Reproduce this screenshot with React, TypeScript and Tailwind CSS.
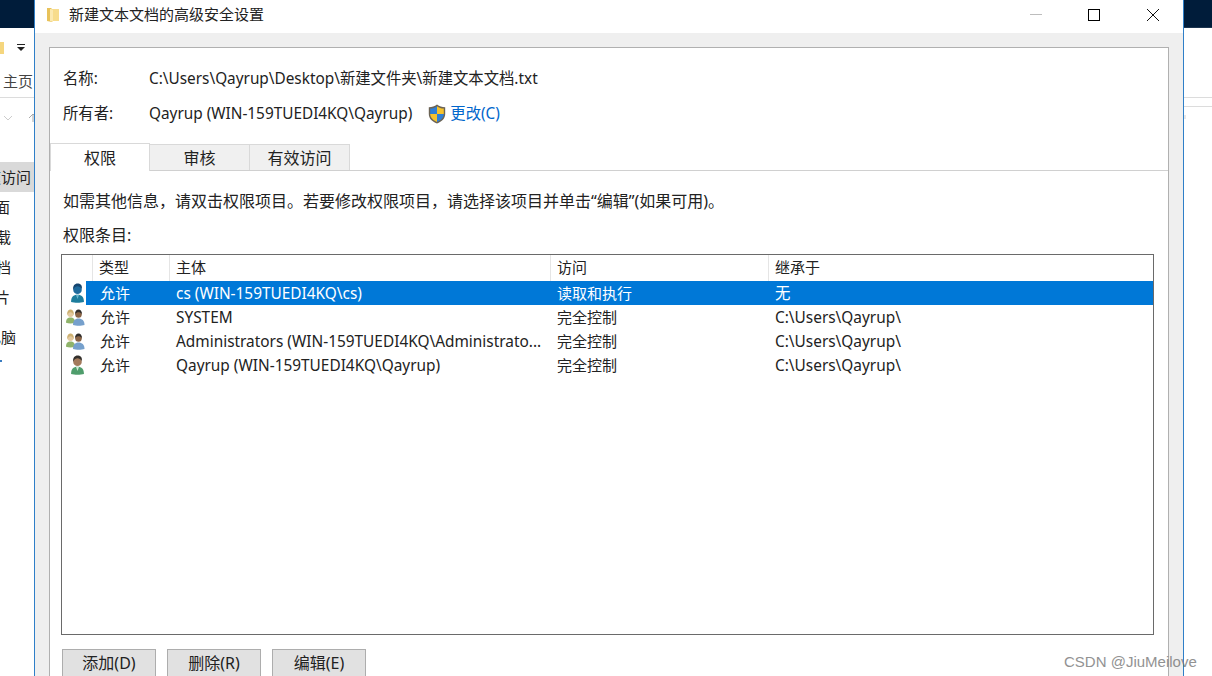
import React from "react";

const font = { fontFamily: '"Noto Sans", "Noto Sans CJK SC", sans-serif' };

const rows = [
  { icon: "cs", type: "允许", who: "cs (WIN-159TUEDI4KQ\\cs)", access: "读取和执行", from: "无" },
  { icon: "group", type: "允许", who: "SYSTEM", access: "完全控制", from: "C:\\Users\\Qayrup\\" },
  { icon: "group", type: "允许", who: "Administrators (WIN-159TUEDI4KQ\\Administrato...", access: "完全控制", from: "C:\\Users\\Qayrup\\" },
  { icon: "user", type: "允许", who: "Qayrup (WIN-159TUEDI4KQ\\Qayrup)", access: "完全控制", from: "C:\\Users\\Qayrup\\" },
];

const navItems = [
  { label: "快速访问", cls: "ml-[-29px] h-[30px]", boxCls: "bg-[#d9d9d9]" },
  { label: "桌面", cls: "ml-[-20px] h-[30px]", boxCls: "" },
  { label: "下载", cls: "ml-[-19px] h-[30px]", boxCls: "" },
  { label: "文档", cls: "ml-[-19px] h-[30px]", boxCls: "" },
  { label: "图片", cls: "ml-[-20px] h-[30px]", boxCls: "mb-[10px]" },
  { label: "此电脑", cls: "ml-[-29px] h-[30px]", boxCls: "" },
];

function FolderIcon({ className }: { className?: string }) {
  return (
    <svg viewBox="0 0 12 16" className={className}>
      <path d="M0 1h4l1 1v13l-5-1z" fill="#e8c25a" />
      <path d="M3 2h9v12H3z" fill="#f7dc8c" />
      <path d="M3 2l3 1v12l-3-1z" fill="#fbe9b0" />
    </svg>
  );
}

function Shield() {
  return (
    <svg viewBox="0 0 18 20" className="w-[18px] h-[20px] shrink-0">
      <path d="M9 0.5C6.5 2.5 4 3.2 0.8 3.3V10c0 4.5 3.2 7.6 8.2 9.5 5-1.900 8.200-5 8.200-9.500V3.300C14 3.200 11.500 2.500 9 0.500z" fill="#6b6355" />
      <path d="M9 2.200V10H2.200V4.600C4.800 4.400 7 3.700 9 2.200z" fill="#2f7fd6" />
      <path d="M9 2.200V10h6.800V4.600C13.200 4.400 11 3.700 9 2.200z" fill="#f6c22c" />
      <path d="M9 10v7.900C5 16.300 2.400 14 2.200 10z" fill="#f6c22c" />
      <path d="M9 10v7.900c4-1.600 6.600-3.900 6.800-7.900z" fill="#2f7fd6" />
    </svg>
  );
}

function UserIcon({ dim }: { dim?: boolean }) {
  return (
    <svg viewBox="1 0 14 18" className="w-[15px] h-[20px]" preserveAspectRatio="none">
      <path d="M2 17c0-4.500 2-6.500 6-6.500s6 2 6 6.500c-3 1-9 1-12 0z" fill={dim ? "#1c7c9c" : "#4f9d6c"} />
      <path d="M6.500 10.500l1.500 4 1.500-4z" fill={dim ? "#68b4cc" : "#cfe8d5"} />
      <circle cx="8" cy="6" r="4" fill={dim ? "#1e6a9c" : "#a27a5c"} />
      <path d="M4 6c-.5-3.500 1.500-5.500 4-5.500s4.800 1.500 4 5c-1-1.800-2.500-2.500-4-2.500S5 4 4 6z" fill={dim ? "#15456f" : "#33302c"} />
    </svg>
  );
}

function GroupIcon() {
  return (
    <svg viewBox="0 0 19 16" className="w-[19px] h-[17px]" preserveAspectRatio="none">
      <path d="M0 13c0-3.500 1.500-5 4.500-5S9 9.500 9 13c-2.500 1-6.500 1-9 0z" fill="#8fb36a" />
      <circle cx="4.500" cy="4.500" r="3" fill="#e3c9a0" />
      <path d="M1.500 6c-.8-3.500 1-5.500 3-5.500s3.800 2 3 5.500c-.5-2-1.500-3-3-3s-2.500 1-3 3z" fill="#cdb070" />
      <path d="M7 15c0-4 2-6 5.500-6s6 2 6 6c-3 1-8.500 1-11.500 0z" fill="#76a0cc" />
      <circle cx="12.500" cy="5" r="3.300" fill="#8a6446" />
      <path d="M9.200 5c-.4-3 1.300-4.500 3.300-4.500s3.700 1.500 3.300 4.500c-1-1.500-2-2-3.300-2s-2.300.5-3.300 2z" fill="#2f2c2a" />
    </svg>
  );
}

function RowIcon({ kind }: { kind: string }) {
  if (kind === "group") return <GroupIcon />;
  return <UserIcon dim={kind === "cs"} />;
}

function BackLeft() {
  return (
    <div className="w-[34px] shrink-0 bg-white flex flex-col overflow-hidden">
      <div className="h-[28px] bg-[#001c3a] shrink-0" />
      <div className="h-[40px] shrink-0 flex items-center gap-[13px] pb-[1px]">
        <div className="w-[4px] h-[12px] bg-[#f5d67e]" />
        <svg viewBox="0 0 8 7" className="w-[8px] h-[7px]">
          <path d="M0 0h8v1H0zM0 3h8L4 7z" fill="#222" />
        </svg>
      </div>
      <div className="h-[30px] shrink-0 pl-[3px] pb-[3px] flex items-center text-[15px] text-[#444] whitespace-nowrap border-b border-[#dcdcdc]">
        主页
      </div>
      <div className="h-[39px] shrink-0 pl-[3px] flex items-center gap-[15px]">
        <svg viewBox="0 0 10 6" className="w-[10px] h-[6px] shrink-0">
          <path d="M1 1l4 4 4-4" fill="none" stroke="#ccc" />
        </svg>
        <svg viewBox="0 0 10 10" className="w-[10px] h-[10px] shrink-0">
          <path d="M5 9V1M1 5l4-4 4 4" fill="none" stroke="#aaa" />
        </svg>
      </div>
      <div className="h-[25px] shrink-0" />
      {navItems.map((item) => (
        <div key={item.label} className={`w-[34px] overflow-hidden ${item.boxCls}`}>
          <div className={`${item.cls} flex items-center whitespace-nowrap text-[15px] text-[#222]`}>{item.label}</div>
        </div>
      ))}
      <div className="w-[2px] h-[2px] bg-[#3a7cc0] mt-[8px]" />
    </div>
  );
}

function BackRight() {
  return (
    <div className="flex-1 bg-white flex flex-col">
      <div className="h-[28px] bg-[#001c3a] border-b border-[#1c3550] shrink-0" />
      <div className="h-[70px] border-b border-[#dcdcdc] shrink-0" />
      <div className="h-[9px] border-b border-[#dcdcdc] shrink-0" />
      <div className="w-[2px] h-[4px] bg-[#e8e8e8] mt-[8px]" />
    </div>
  );
}

function TitleBar() {
  return (
    <div className="h-[33px] shrink-0 bg-white flex items-center">
      <FolderIcon className="w-[12px] h-[16px] ml-[12px] mb-[4px]" />
      <span className="ml-[10px] mb-[4px] text-[15px] text-[#222]">新建文本文档的高级安全设置</span>
      <div className="ml-auto mb-[4px] flex items-center">
        <div className="w-[12px] h-[1px] bg-[#bdbdbd] mr-[46px]" />
        <div className="w-[12px] h-[12px] border border-black mr-[47px]" />
        <svg viewBox="0 0 12 12" className="w-[12px] h-[12px] mr-[24px]">
          <path d="M0 0l12 12M12 0L0 12" stroke="#111" strokeWidth="1" />
        </svg>
      </div>
    </div>
  );
}

function PermissionTable() {
  return (
    <div className="ml-[11px] mr-[14px] h-[381px] border border-[#6a6a6a] overflow-hidden">
      <div className="h-[26px] flex text-[15px] text-[#222]">
        <div className="w-[31px] border-r border-[#e5e5e5]" />
        <div className="w-[77px] pl-[6px] pb-[1px] border-r border-[#e5e5e5] flex items-center">类型</div>
        <div className="w-[381px] pl-[6px] pb-[1px] border-r border-[#e5e5e5] flex items-center">主体</div>
        <div className="w-[218px] pl-[6px] pb-[1px] border-r border-[#e5e5e5] flex items-center">访问</div>
        <div className="flex-1 pl-[6px] pb-[1px] flex items-center">继承于</div>
      </div>
      {rows.map((row, i) => (
        <div key={row.who} className="h-[24px] flex text-[15.4px] text-[#222]">
          <div className="w-[24px] shrink-0 flex items-center justify-end pr-[1px]">
            <RowIcon kind={row.icon} />
          </div>
          <div className={`flex-1 flex items-center ${i === 0 ? "bg-[#0078d7] text-white" : ""}`}>
            <div className="w-[84px] pl-[14px] text-[15px]">{row.type}</div>
            <div className="w-[381px] pl-[6px] pt-[2px] whitespace-nowrap">{row.who}</div>
            <div className="w-[218px] pl-[6px] text-[15px]">{row.access}</div>
            <div className="pl-[6px] pt-[2px] whitespace-nowrap">{row.from}</div>
          </div>
        </div>
      ))}
    </div>
  );
}

export default function App() {
  return (
    <div className="relative w-[1212px] h-[676px] overflow-hidden flex bg-white text-[15px]" style={font}>
      <BackLeft />
      <div className="w-[1150px] shrink-0 flex flex-col border-x border-[#2f7fc8]">
        <TitleBar />
        <div className="flex-1 bg-[#efefef] pt-[14px] px-[14px]">
          <div className="bg-white border-t border-x border-[#b0b0b0] h-[640px]">
            <div className="h-[49px] flex items-end pb-[7px] pl-[13px] text-[15.35px] text-[#222]">
              <span className="w-[86px]">名称:</span>
              <span>C:\Users\Qayrup\Desktop\新建文件夹\新建文本文档.txt</span>
            </div>
            <div className="h-[33px] flex items-center pl-[13px] pt-[1px] text-[15.35px] text-[#222]">
              <span className="w-[86px]">所有者:</span>
              <span>Qayrup (WIN-159TUEDI4KQ\Qayrup)</span>
              <span className="ml-[16px] mr-[4px] flex"><Shield /></span>
              <span className="text-[#0066cc]">更改(C)</span>
            </div>
            <div className="mt-[13px] h-[28px] flex border-b border-[#d0d0d0] text-[16px]">
              <div className="w-[100px] h-[28px] border-t border-x border-[#d9d9d9] bg-white flex items-center justify-center text-[#222]">权限</div>
              <div className="w-[100px] mt-[1px] h-[26px] border-t border-r border-[#d9d9d9] bg-[#f0f0f0] flex items-center justify-center text-[#222]">审核</div>
              <div className="w-[100px] mt-[1px] h-[26px] border-t border-r border-[#d9d9d9] bg-[#f0f0f0] flex items-center justify-center text-[#222]">有效访问</div>
            </div>
            <div className="mt-[20px] pl-[13px] h-[20px] flex items-center text-[16px] text-[#222] whitespace-nowrap">如需其他信息，请双击权限项目。若要修改权限项目，请选择该项目并单击“编辑”(如果可用)。</div>
            <div className="mt-[14px] pl-[13px] h-[20px] flex items-center text-[16px] text-[#222]">权限条目:</div>
            <div className="mt-[9px]">
              <PermissionTable />
            </div>
            <div className="mt-[14px] ml-[12px] flex gap-[11px]">
              {["添加(D)", "删除(R)", "编辑(E)"].map((label) => (
                <div key={label} className="w-[94px] h-[28px] bg-[#e1e1e1] border border-[#adadad] flex items-center justify-center text-[16px] text-[#222]">
                  {label}
                </div>
              ))}
            </div>
          </div>
        </div>
      </div>
      <BackRight />
      <div className="absolute left-[1064px] top-[651px] text-[15px] text-[#777] opacity-80 whitespace-nowrap" style={{ fontFamily: '"Liberation Sans", sans-serif' }}>
        CSDN @JiuMeilove
      </div>
    </div>
  );
}
